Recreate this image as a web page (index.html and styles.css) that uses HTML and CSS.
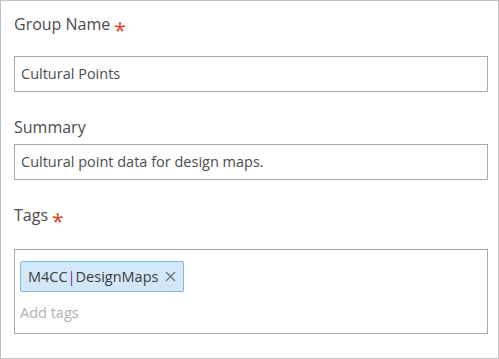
FILE: index.html
```html
<!DOCTYPE html>
<html lang="en">
<head>
    <meta charset="UTF-8">
    <title>Group Details</title>
    <link rel="stylesheet" href="styles.css">
</head>
<body>
    <div class="panel">
        <div class="field">
            <label class="field-label starred">Group Name<span class="required">*</span></label>
            <div class="text-input">Cultural Points</div>
        </div>

        <div class="field">
            <label class="field-label">Summary</label>
            <div class="text-input">Cultural point data for design maps.</div>
        </div>

        <div class="field">
            <label class="field-label starred tags-label">Tags<span class="required">*</span></label>
            <div class="tag-box">
                <span class="tag">
                    <span class="tag-text">M4CC<span class="pipe">|</span>DesignMaps</span>
                    <svg class="tag-close" width="11" height="11" viewBox="0 0 11 11">
                        <path d="M1 1 L10 10 M10 1 L1 10" stroke="#6a6a6a" stroke-width="1.1" fill="none"/>
                    </svg>
                </span>
                <div class="placeholder">Add tags</div>
            </div>
        </div>
    </div>
</body>
</html>
```

FILE: styles.css
```css
body {
    margin: 0;
    font-family: 'Open Sans', 'Lato', sans-serif;
    color: #4c4c4c;
    background: #fff;
}

.panel {
    width: 499px;
    height: 359px;
    box-sizing: border-box;
    border: 1px solid #c2c2c2;
    padding: 13px 10px 0 13px;
}

.field {
    margin-bottom: 25px;
}

.field-label {
    display: block;
    height: 20px;
    font-size: 16px;
    line-height: 20px;
    margin-bottom: 7px;
}

.field-label.starred {
    margin-bottom: 22px;
}

.field-label.tags-label {
    margin-bottom: 24px;
}

.required {
    display: inline-block;
    line-height: 0;
    color: #e3391c;
    font-size: 21px;
    position: relative;
    top: 8px;
    margin-left: 4px;
}

.text-input {
    height: 36px;
    box-sizing: border-box;
    border: 1px solid #a9a9a9;
    padding: 0 6px;
    font-size: 14.5px;
    line-height: 34px;
}

.tag-box {
    height: 85px;
    box-sizing: border-box;
    border: 1px solid #a9a9a9;
    padding: 11px 5px;
}

.tag {
    display: inline-flex;
    align-items: center;
    gap: 7px;
    height: 31px;
    box-sizing: border-box;
    padding: 0 7px;
    background: #d2e8f8;
    border: 1px solid #7fb7df;
    border-radius: 2px;
    font-size: 14.5px;
    color: #3b3b3b;
}

.pipe {
    color: #7a2a8a;
}

.placeholder {
    margin-top: 11px;
    font-size: 14.5px;
    line-height: 20px;
    color: #b0b0b0;
}
```
